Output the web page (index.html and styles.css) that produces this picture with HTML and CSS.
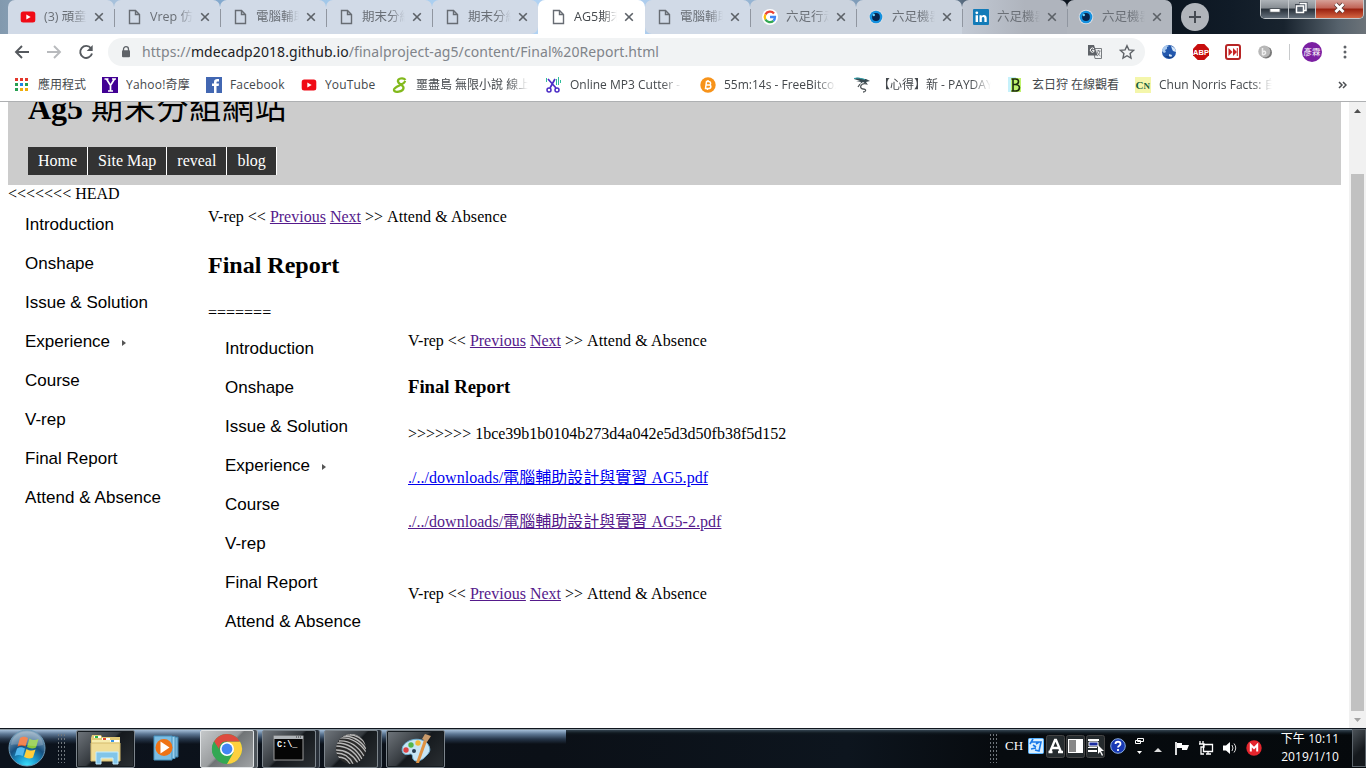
FILE: index.html
```html
<!DOCTYPE html>
<html lang="zh-Hant">
<head>
<meta charset="utf-8">
<title>AG5期末分組網站</title>
<link rel="stylesheet" href="styles.css">
</head>
<body>
<svg class="defs" aria-hidden="true">
<defs>
<symbol id="doc" viewBox="0 0 16 16"><path d="M3.500 1.500h6l4 4v9h-10zM9.500 1.500v4h4" fill="none" stroke="currentColor" stroke-width="1.400"/></symbol>
<symbol id="x" viewBox="0 0 10 10"><path d="M1.200 1.200l7.600 7.600M8.800 1.200L1.200 8.800" stroke="currentColor" stroke-width="1.600"/></symbol>
<symbol id="yt" viewBox="0 0 16 16"><rect x=".7" y="2.500" width="14.600" height="11" rx="2.500" fill="#f00b16"/><path d="M6.300 5.500v5l4.400-2.500z" fill="#fff"/></symbol>
<symbol id="eye" viewBox="0 0 16 16"><circle cx="8" cy="8" r="7.300" fill="#d9dde3"/><circle cx="8" cy="8" r="6.300" fill="#1591df"/><circle cx="8" cy="8" r="3.900" fill="#08254d"/><circle cx="5.800" cy="6" r="1.200" fill="#65d5ff"/></symbol>
<symbol id="google" viewBox="0 0 16 16"><circle cx="8" cy="8" r="8" fill="#fff"/><g fill="none" stroke-width="2.300"><path d="M12 4.400A5.200 5.200 0 0 0 3.400 5.500" stroke="#ea4335"/><path d="M3.400 5.500a5.200 5.200 0 0 0 0 5" stroke="#fbbc05"/><path d="M3.400 10.500a5.200 5.200 0 0 0 8 1.300" stroke="#34a853"/><path d="M11.400 11.800A5 5 0 0 0 13 8H8" stroke="#4285f4"/></g></symbol>
</defs>
</svg>

<header class="tabstrip">
  <div class="tabs">
    <div class="tab first"><svg class="fav"><use href="#yt"/></svg><span>(3) 頑童</span><svg class="close"><use href="#x"/></svg></div>
    <div class="tab"><svg class="fav"><use href="#doc"/></svg><span>Vrep 仿真</span><svg class="close"><use href="#x"/></svg></div>
    <div class="tab"><svg class="fav"><use href="#doc"/></svg><span>電腦輔助</span><svg class="close"><use href="#x"/></svg></div>
    <div class="tab"><svg class="fav"><use href="#doc"/></svg><span>期末分組</span><svg class="close"><use href="#x"/></svg></div>
    <div class="tab last-left"><svg class="fav"><use href="#doc"/></svg><span>期末分組</span><svg class="close"><use href="#x"/></svg></div>
    <div class="tab active"><svg class="fav"><use href="#doc"/></svg><span>AG5期末</span><svg class="close"><use href="#x"/></svg></div>
    <div class="tab first-right"><svg class="fav"><use href="#doc"/></svg><span>電腦輔助</span><svg class="close"><use href="#x"/></svg></div>
    <div class="tab mid"><svg class="fav"><use href="#google"/></svg><span>六足行走</span><svg class="close"><use href="#x"/></svg></div>
    <div class="tab mid"><svg class="fav"><use href="#eye"/></svg><span>六足機器</span><svg class="close"><use href="#x"/></svg></div>
    <div class="tab dim linkedin"><svg class="fav" viewBox="0 0 16 16"><rect width="16" height="16" rx="1" fill="#127bb8"/><circle cx="3.800" cy="3.800" r="1.400" fill="#fff"/><path d="M2.600 6.200H5V13H2.600zM6.500 6.200h2.200v1c1.200-2 5-1.700 5 1.700V13h-2.300V9.500c0-2-2.600-2-2.600 0V13H6.500z" fill="#fff"/></svg><span>六足機器</span><svg class="close"><use href="#x"/></svg></div>
    <div class="tab dim end"><svg class="fav"><use href="#eye"/></svg><span>六足機器</span><svg class="close"><use href="#x"/></svg></div>
  </div>
  <svg class="newtab" viewBox="0 0 28 28"><circle cx="14" cy="14" r="14" fill="#b1b5bb"/><path d="M14 8v12M8 14h12" stroke="#464b52" stroke-width="2"/></svg>
  <div class="winbtns">
    <svg class="wb min" viewBox="0 0 29 18"><rect x="9.500" y="8.500" width="11" height="4" fill="#fff" stroke="#4a5058"/></svg>
    <svg class="wb max" viewBox="0 0 26 18"><path d="M10 3.500h7v7h-2M7.500 5.500h7v7h-7z" fill="none" stroke="#434a54" stroke-width="3"/><path d="M10.500 3.500H17v7h-2M7.500 6h7v6.500h-7z" fill="#56606c" stroke="#fff" stroke-width="1.500"/></svg>
    <svg class="wb cls" viewBox="0 0 47 18"><path d="M19.500 4l8 8M27.500 4l-8 8" stroke="#5a3835" stroke-width="4.500"/><path d="M19.500 4l8 8M27.500 4l-8 8" stroke="#fff" stroke-width="2.800"/></svg>
  </div>
</header>

<div class="toolbar">
  <svg class="nav" viewBox="0 0 16 16"><path d="M15 8H2.500M8 2L2 8l6 6" fill="none" stroke="#55595e" stroke-width="1.900"/></svg>
  <svg class="nav" viewBox="0 0 16 16"><path d="M1 8h12.500M8 2l6 6-6 6" fill="none" stroke="#b8babd" stroke-width="1.900"/></svg>
  <svg class="nav" viewBox="0 0 16 16"><path d="M13 4.300A6 6 0 1 0 14 9.500" fill="none" stroke="#55595e" stroke-width="1.900"/><path d="M14.700 1v6H8.700z" fill="#55595e"/></svg>
  <div class="omnibox">
    <svg class="lock" viewBox="0 0 10 12"><path d="M2.500 5V3.200a2.500 2.500 0 0 1 5 0V5" fill="none" stroke="#5f6368" stroke-width="1.300"/><rect x="1" y="4.300" width="8" height="7" rx="1" fill="#5f6368"/></svg>
    <span class="url">https://<b>mdecadp2018.github.io</b>/finalproject-ag5/content/Final%20Report.html</span>
    <svg class="translate" viewBox="0 0 16 16"><path d="M6 4.500h8.500v10H8z" fill="#f1f3f4" stroke="#787c80"/><path d="M1 1h6l3.500 10.500H1z" fill="#5f6368"/><path d="M7 4.700A2.100 2.100 0 1 0 7 7.500V6.300H5" fill="none" stroke="#fff"/><path d="M9.500 7h4M11.500 6v1M10 12c2-1 2.500-3 2.800-5M10 8c1 2 2 3 3.500 4" fill="none" stroke="#787c80" stroke-width=".9"/></svg>
    <svg class="star" viewBox="0 0 16 16"><path d="M8 1.700l1.900 4.200 4.600.5-3.400 3.100.9 4.500-4-2.300L4 14l.9-4.500L1.500 6.400l4.600-.5z" fill="none" stroke="#5f6368" stroke-width="1.400"/></svg>
  </div>
  <div class="exts">
    <svg viewBox="0 0 16 16"><circle cx="8" cy="8" r="7" fill="#2358ad"/><path d="M1 7c0-3 2-5 5-6l2 1-2 1v2L4 6l1 2-2 1z" fill="#a9c9ee"/><path d="M10 2c3 1 5 3 5 6l-3-1-1-2zM8 10l3 1-1 3-2-1z" fill="#d6e7f8"/><path d="M4 12c3 3 7 3 9 0l-2 1-4-1z" fill="#153f85"/></svg>
    <svg viewBox="0 0 16 16"><path d="M4.700 0h6.600L16 4.700v6.600L11.300 16H4.700L0 11.300V4.700z" fill="#c70d0d"/><text x="8" y="11" text-anchor="middle" class="abp">ABP</text></svg>
    <svg viewBox="0 0 16 16"><rect x="1" y="1" width="14" height="14" rx="2" fill="#fff" stroke="#b72525" stroke-width="2"/><path d="M3.500 4l4 4-4 4zM8 4l4 4-4 4z" fill="#c82323"/><path d="M12.300 4v8" stroke="#c82323"/></svg>
    <svg viewBox="0 0 16 16"><circle cx="9" cy="8.500" r="6" fill="#777"/><circle cx="7.300" cy="7.500" r="6" fill="#b7b7b7"/><path d="M5.500 4v7M5.500 8c3-3 5 3 0 3" fill="none" stroke="#eee" stroke-width="1.500"/></svg>
  </div>
  <i class="sep"></i><div class="avatar">彥霖</div>
  <svg class="menu" viewBox="0 0 4 16"><g fill="#5f6368"><circle cx="2" cy="3" r="1.500"/><circle cx="2" cy="8" r="1.500"/><circle cx="2" cy="13" r="1.500"/></g></svg>
</div>

<nav class="bookmarks">
  <div class="bm b1"><svg viewBox="0 0 16 16"><path d="M1 1h3v3H1zM6 1h3v3H6zM11 1h3v3h-3z" fill="#e3372b"/><path d="M6 6h3v3H6z" fill="#1b83e8"/><path d="M1 6h3v3H1zM11 6h3v3h-3zM1 11h3v3H1z" fill="#28a052"/><path d="M6 11h3v3H6zM11 11h3v3h-3z" fill="#efad0b"/></svg><span>應用程式</span></div>
  <div class="bm b2"><svg viewBox="0 0 16 16"><rect width="16" height="16" fill="#410093"/><path d="M2.500 2h4M10 2h4M4.500 2l4 6.500L12.500 2M8.500 8v6M6 14h5" fill="none" stroke="#fff" stroke-width="1.700"/></svg><span>Yahoo!奇摩</span></div>
  <div class="bm b3"><svg viewBox="0 0 16 16"><rect width="16" height="16" fill="#4267b2"/><path d="M8 16V9H6V6.500h2V5c0-2.200 1.400-3 3.200-3H13v2.400h-1.300c-.9 0-1.200.4-1.200 1.100v1H13L12.700 9h-2.200v7z" fill="#fff"/></svg><span>Facebook</span></div>
  <div class="bm b4"><svg><use href="#yt"/></svg><span>YouTube</span></div>
  <div class="bm b5"><svg viewBox="0 0 16 16"><path d="M13.500 3C11 0 5.500 1.500 6 4.500c.5 3 6 3.500 5.500 6.500-.5 4-9 5-9.500 2C1.500 9 13 8 13 4" fill="none" stroke="#82b91c" stroke-width="2.300"/></svg><span class="fade">噩盡島 無限小說 線上</span></div>
  <div class="bm b6"><svg viewBox="0 0 16 16"><path d="M2 2l8 9M9 2L4 11" stroke="#4b2cc6" stroke-width="1.700"/><circle cx="3" cy="13" r="2" fill="none" stroke="#4b2cc6" stroke-width="1.500"/><circle cx="11" cy="13" r="2" fill="none" stroke="#4b2cc6" stroke-width="1.500"/><path d="M.5 1v4M10.500 2v6M12.500 0v8M14.500 3v3" stroke="#30bd9b"/></svg><span class="fade">Online MP3 Cutter - C</span></div>
  <div class="bm b7"><svg viewBox="0 0 16 16"><circle cx="8" cy="8" r="7.700" fill="#f7931a"/><path d="M6.500 4.500l-1 7h3c3 0 3-3.200.7-3.500C11.500 7.500 11 4.500 8.500 4.500zM6 8h3M8 3v1.500M7.500 11.500V13" fill="none" stroke="#fff" stroke-width="1.500"/></svg><span class="fade">55m:14s - FreeBitco.in</span></div>
  <div class="bm b8"><svg viewBox="0 0 16 16"><path d="M0 2c4-3 8 0 12 0l4 2-4 1 2 3-5-3-3 2 1-2-5-1h4z" fill="#394950"/><path d="M0 1.500c4-1 7 0 11 1" fill="none" stroke="#2d9fa9"/><path d="M13 7C6 5 5 12 9 12s3 3 0 3M6 7l-2 3" fill="none" stroke="#4f5558" stroke-width="1.300"/></svg><span class="fade">【心得】新 - PAYDAY 2</span></div>
  <div class="bm b9"><svg viewBox="0 0 16 16"><path d="M0 0h8v15H0z" fill="#c6f1fb"/><path d="M3 1h10v14H3z" fill="#bff36d"/><path d="M5 2v12M3.500 2h4c4 0 4 5 0 5.500H5M7.500 7.500c5.500 0 5 6.500 0 6.500h-4" fill="none" stroke="#1c2b0e" stroke-width="1.600"/></svg><span>玄日狩 在線觀看</span></div>
  <div class="bm b10"><svg viewBox="0 0 16 16"><rect width="16" height="16" fill="#f4f6ab"/><text x=".5" y="12" class="cn">C<tspan class="small">N</tspan></text></svg><span class="fade">Chun Norris Facts: 自由</span></div>
  <svg class="more" viewBox="0 0 9 8"><path d="M1 1l3 3-3 3M5 1l3 3-3 3" fill="none" stroke="#4b4e52" stroke-width="1.500"/></svg>
</nav>

<div class="viewport">
  <div class="page">
    <div class="banner"><h1>Ag5 <span>期末分組網站</span></h1>
      <ul class="topmenu"><li>Home</li><li>Site Map</li><li>reveal</li><li>blog</li></ul></div>
    <p class="head">&lt;&lt;&lt;&lt;&lt;&lt;&lt; HEAD</p>
    <div class="split outer">
      <ul class="side"><li>Introduction</li><li>Onshape</li><li>Issue &amp; Solution</li><li>Experience<i></i></li><li>Course</li><li>V-rep</li><li>Final Report</li><li class="wide-text">Attend &amp; Absence</li></ul>
      <main>
        <p class="pager">V-rep &lt;&lt; <a>Previous</a> <a>Next</a> &gt;&gt; <span>Attend &amp; Absence</span></p>
        <h2>Final Report</h2>
        <p class="rule">=======</p>
        <div class="split inner">
          <ul class="side"><li>Introduction</li><li>Onshape</li><li>Issue &amp; Solution</li><li>Experience<i></i></li><li>Course</li><li>V-rep</li><li>Final Report</li><li class="wide-text">Attend &amp; Absence</li></ul>
          <section>
            <p class="pager pager2">V-rep &lt;&lt; <a>Previous</a> <a>Next</a> &gt;&gt; <span>Attend &amp; Absence</span></p>
            <h3>Final Report</h3>
            <p>&gt;&gt;&gt;&gt;&gt;&gt;&gt; 1bce39b1b0104b273d4a042e5d3d50fb38f5d152</p>
            <p class="file"><a class="fresh">./../downloads/電腦輔助設計與實習 AG5.pdf</a></p>
            <p class="file"><a>./../downloads/電腦輔助設計與實習 AG5-2.pdf</a></p>
            <p class="pager foot">V-rep &lt;&lt; <a>Previous</a> <a>Next</a> &gt;&gt; <span>Attend &amp; Absence</span></p>
          </section>
        </div>
      </main>
    </div>
  </div>
  <div class="scroll"><svg viewBox="0 0 17 17"><path d="M5 11h7L8.500 7z" fill="#505050"/></svg><div class="thumb"></div><svg viewBox="0 0 17 17"><path d="M5 7h7l-3.500 4z" fill="#a3a3a3"/></svg></div>
</div>

<footer class="taskbar">
  <svg class="orb" viewBox="0 0 38 38"><defs><radialGradient id="og" cx=".5" cy="1" r=".95"><stop offset="0" stop-color="#3fe6ff"/><stop offset=".3" stop-color="#1b9bd0"/><stop offset=".6" stop-color="#17507f"/><stop offset="1" stop-color="#8ea9bf"/></radialGradient></defs><circle cx="19" cy="19" r="18" fill="url(#og)" stroke="#6c9ab8"/><path d="M12 9c3-2 5-1.500 8 0l-2.500 8.500c-3-1.500-5-1.500-8 0z" fill="#f06829"/><path d="M21.500 9.500c3 2 6 2 9 .5l-2.500 8.500c-3 1.500-6 1-9-.5z" fill="#8bc93c"/><path d="M9 19.500c3-2 5-1.500 8 0L14.700 27c-3-1.500-5-1.500-8 0z" fill="#52b8ee"/><path d="M18.500 20c3 2 6 2 9 .5L25 28.500c-3 1.500-6 1-9-.5z" fill="#ffce3b"/><path d="M3 16C4-2 34-2 35 16c-10 3-21-2-32 0z" fill="#fff" opacity=".2"/></svg>
  <i class="grip g1"></i>
  <div class="task wide t1"><svg viewBox="0 0 32 32"><path d="M1 5l1-3h9l1 2h18v23H1z" fill="#e2c975"/><path d="M2 7h28v4H2z" fill="#f7ecae"/><path d="M4 3h7v2H4z" fill="#fff"/><path d="M5 3h3v2H5z" fill="#2bb747"/><path d="M12 5h8v2h-8z" fill="#fff"/><path d="M13 5h3v2h-3z" fill="#df4b31"/><path d="M20 7h9v2h-9z" fill="#fff"/><path d="M21 7h3v2h-3z" fill="#3694e5"/><path d="M1 10h29v18H1z" fill="#f0dd97" stroke="#d5bc6e"/><path d="M6 31V19h22v12h-5v-6H11v6z" fill="#82c5e9" stroke="#c5edff"/></svg></div>
  <svg class="wmp" viewBox="0 0 26 26"><path d="M8 2h17v20H8z" fill="#75b4d8" stroke="#3a7ca6"/><path d="M5 1.500h17v22H5z" fill="#9bd0ec" stroke="#4c94be"/><path d="M1 1h18v24H1z" fill="#7cbde2" stroke="#4593c1"/><circle cx="11" cy="12.500" r="8.500" fill="#ef7315"/><path d="M7.500 6.500l9 6-9 6z" fill="#fff"/></svg>
  <div class="task bright stack t2"><svg viewBox="0 0 32 32"><circle cx="16" cy="16" r="15" fill="#33a853"/><path d="M16 8.500h13A15 15 0 0 1 16 31l6.500-11.500z" fill="#fed03f"/><path d="M3 8.500A15 15 0 0 1 16 1a15 15 0 0 1 13 7.500H16a7 7 0 0 0-6.500 11z" fill="#de4b3f"/><path d="M3 8.500a15 15 0 0 0 0 15L12 22z" fill="#33a853"/><circle cx="16" cy="16" r="7" fill="#fff"/><circle cx="16" cy="16" r="5.400" fill="#4285f4"/></svg></div>
  <div class="task stack t3"><svg viewBox="0 0 32 32"><rect x="1" y="3" width="29" height="24" fill="#050505" stroke="#999"/><path d="M1 4.500h29" stroke="#b0b4b8" stroke-width="3"/><path d="M23 4h1M25 4h1M27 4h1" stroke="#333"/><text x="4" y="14" class="cmd">C:\_</text></svg></div>
  <div class="task stack t4"><svg viewBox="0 0 32 32"><clipPath id="ball"><circle cx="16" cy="16" r="15"/></clipPath><circle cx="16" cy="16" r="15" fill="#2b2b2b"/><g clip-path="url(#ball)" fill="none" stroke="#b9b9b9" stroke-width="1.300"><path d="M11 2q14-1 20 10M8 3q15 0 23 13M5 5q16-1 26 14M4 8q15-1 25 15M2 10q16 0 25 16M1 13q16 0 24 15M1 17q14 0 22 13M1 20q12 0 17 11M3 24q8 0 12 7M15 1q9-1 15 7"/></g></svg></div>
  <div class="task wide t5"><svg viewBox="0 0 32 32"><path d="M3 13C9 4 25 4 29 13c2 5 0 7-3 10-4 5-11 7-13 3-1-3 0-5-3-5-5 2-10-1-7-8z" fill="#c7e5f4" stroke="#6baccf"/><circle cx="6" cy="17" r="2.700" fill="#dd4244"/><circle cx="11" cy="12" r="2.700" fill="#54b649"/><circle cx="18" cy="10" r="2.700" fill="#f2b938"/><circle cx="14" cy="18" r="2" fill="#263e51"/><path d="M16 30l8-23 3 1-8 22z" fill="#df9343"/><path d="M22 6l3-5 6 2-4 6z" fill="#c99a6b"/></svg></div>
  <div class="tray">
    <i class="grip g2"></i><span class="ch">CH</span>
    <svg class="ime" viewBox="0 0 16 16"><rect x=".5" y=".5" width="15" height="15" rx="1" fill="#d9efff" stroke="#5ab4ff"/><path d="M5 1L2 6M3 4h10l-2 9-4-1M5 7l3 2M3 11l5-1M8 6l3-2" fill="none" stroke="#1878e8" stroke-width="1.600"/></svg>
    <svg class="lang" viewBox="0 0 20 23"><rect x=".5" y=".5" width="18" height="22" rx="2" fill="#252b2e" stroke="#444"/><path d="M4 17l5-12h1l5 12M6 13h7M2.500 17h4M12 17h5" fill="none" stroke="#fff" stroke-width="2.300"/></svg>
    <svg class="lang" viewBox="0 0 20 23"><rect x=".5" y=".5" width="18" height="22" rx="2" fill="#252b2e" stroke="#444"/><path d="M2 4h15v14H2z" fill="#fff"/><path d="M3 5h7v12H3z" fill="#888"/></svg>
    <svg class="lang" viewBox="0 0 20 23"><rect x=".5" y=".5" width="18" height="22" rx="2" fill="#252b2e" stroke="#444"/><path d="M2 4h11v2H2zM2 15h9v2H2zM2 12h9v1H2z" fill="#fff"/><path d="M3 7h9v4H3z" fill="#1a2ca0" stroke="#fff"/><path d="M12 10v9l2-2 2 4 1-1-2-4h3z" fill="#fff"/></svg>
    <svg class="help" viewBox="0 0 16 16"><circle cx="8" cy="8" r="7.300" fill="#1839b5" stroke="#8baede"/><path d="M5.500 6c0-3 5-3 5 0 0 1.700-2.500 1.600-2.500 3.500M8 11v2" fill="none" stroke="#fff" stroke-width="1.800"/></svg>
    <svg class="restore" viewBox="0 0 9 18"><path d="M2.500 1.500h6v3h-6zM.5 3.500h5v3h-5z" fill="#080d10" stroke="#fff"/><path d="M2 14h5l-2.500 3z" fill="#fff"/></svg>
    <svg class="up" viewBox="0 0 8 4"><path d="M0 4h8L4 0z" fill="#ddd"/></svg>
    <svg class="flag" viewBox="0 0 16 16"><path d="M2 2v13" stroke="#fff" stroke-width="1.700"/><path d="M3 3h5v2h7l-2 5H8V8H3z" fill="#fff"/></svg>
    <svg class="net" viewBox="0 0 16 16"><path d="M5.500 4.500h9v7h-9zM8 14h5M10 11v3M2 1v3M5 1v3M1 4h5v3H3v7h3" fill="none" stroke="#fff" stroke-width="1.300"/></svg>
    <svg class="vol" viewBox="0 0 16 16"><path d="M1 5.500h3L8 2v12l-4-3.500H1z" fill="#fff"/><path d="M10 5q2 3 0 6M12 3.500q3.500 4.500 0 9" fill="none" stroke="#ddd"/></svg>
    <svg class="mega" viewBox="0 0 16 16"><circle cx="8" cy="8" r="7.700" fill="#e4252d"/><path d="M4.800 11.500V5L8 8.200 11.200 5v6.500" fill="none" stroke="#fff" stroke-width="2"/></svg>
    <div class="clock"><div>下午 10:11</div><div>2019/1/10</div></div>
    <i class="desktop"></i>
  </div>
</footer>
</body>
</html>
```
FILE: styles.css
```css
*{box-sizing:border-box}
body{margin:0;width:1366px;height:768px;overflow:hidden;display:flex;flex-direction:column;background:#fff;font-family:"Open Sans","Noto Sans CJK TC",sans-serif}
svg{display:block;flex-shrink:0}
.defs{position:absolute;width:0;height:0}
p,h1,h2,h3,ul{margin:0;padding:0;list-style:none}

.tabstrip{height:34px;flex-shrink:0;display:flex;background:linear-gradient(90deg,#8299ae 0,#a9c4df 9%,#80a5ca 15%,#a6cced 25%,#b4d4f5 45%,#7895b1 65%,#7890a8 69%,#202b38 73%,#070e17 80%,#101b27 90%,#18232e 94%,#56626c 98%,#6c7379 100%)}
.tabs{display:flex;padding-left:8px}
.tab{width:106px;height:34px;flex-shrink:0;padding-left:12px;display:flex;align-items:center;background:#d1dae7;color:#6a6f76;border-radius:7px 7px 0 0;position:relative}
.tab::after{content:"";position:absolute;right:-1px;top:9px;width:1px;height:18px;background:#9096a0;z-index:1}
.tab.last-left::after,.tab.active::after,.tab.end::after{display:none}
.tab .fav{width:16px;height:16px;color:#676c73}
.tab span{width:43px;margin-left:8px;font-size:12.500px;line-height:18px;white-space:nowrap;overflow:hidden;-webkit-mask-image:linear-gradient(90deg,#000 65%,transparent);mask-image:linear-gradient(90deg,#000 65%,transparent)}
.tab .close{width:10px;height:10px;margin-left:7px;color:#5c6167}
.tab.last-left{border-bottom-right-radius:7px}
.tab.active{width:107px;background:#fff;color:#45494d}
.tab.first-right{width:105px;padding-left:11px;border-bottom-left-radius:7px}
.tab.mid{background:#cbd3de}
.tab.dim{background:#b1b6be;width:105px;padding-left:11px}
.tab.linkedin{background:linear-gradient(90deg,#c2c9d4,#afb4bd 60%)}
.newtab{width:28px;height:28px;margin:3px 0 0 9px}
.winbtns{display:flex;height:19px;margin-left:51px;border:1px solid #c5c9cc;border-top:0;border-radius:0 0 5px 5px;overflow:hidden}
.wb{height:18px;background:linear-gradient(#aeb3b8,#868c92 45%,#272f38 50%,#65707c);border-right:1px solid #c2c6ca}
.min{width:28px}
.max{width:27px}
.cls{width:47px;border:0;background:linear-gradient(#d6a097,#c06255 45%,#99200f 50%,#d46542)}

.toolbar{height:36px;flex-shrink:0;display:flex;align-items:center;padding-left:14px}
.nav{width:16px;height:16px;margin-right:16px}
.omnibox{width:1037px;height:28px;border-radius:14px;background:#f1f3f4;display:flex;align-items:center;padding-left:13px;margin-left:-2px}
.lock{width:10px;height:12px}
.url{width:545px;margin-left:11px;font-family:"Noto Sans",sans-serif;font-size:14px;letter-spacing:.077px;color:#80848a;white-space:nowrap;line-height:22px}
.url b{font-weight:400;color:#202124}
.translate{width:16px;height:16px;margin-left:400px}
.star{width:16px;height:16px;margin-left:16px}
.exts{display:flex;gap:16px;margin-left:16px}
.exts svg{width:16px;height:16px}
.abp{font:bold 7.500px "Liberation Sans",sans-serif;fill:#fff}
.sep{width:1px;height:16px;background:#c8cacc;margin-left:16px}
.avatar{width:20px;height:20px;margin-left:12px;border-radius:50%;background:#7b1fa2;color:#fff;font-size:8.500px;line-height:20px;text-align:center;white-space:nowrap}
.menu{width:4px;height:16px;margin-left:21px}

.bookmarks{height:32px;flex-shrink:0;display:flex;align-items:center;padding:0 0 2px 14px;border-bottom:1px solid #aeb0b2;color:#44484c;font-size:12px}
.bm{display:flex;align-items:center;gap:8px;flex-shrink:0;height:28px}
.bm svg{width:16px;height:16px}
.bm span{white-space:nowrap;overflow:hidden;flex:1;line-height:20px}
.bm .fade{-webkit-mask-image:linear-gradient(90deg,#000 82%,transparent);mask-image:linear-gradient(90deg,#000 82%,transparent)}
.b1{width:72px;margin-right:16px}
.b2{width:88px;margin-right:16px;letter-spacing:.2px}
.b3{width:80px;margin-right:15px;letter-spacing:.15px}
.b4{width:76px;margin-right:15px;letter-spacing:.15px}
.b5{width:136px;margin-right:18px}
.b6{width:136px;margin-right:18px}
.b7{width:136px;margin-right:18px}
.b8{width:137px;margin-right:17px}
.b9{width:112px;margin-right:15px}
.b10{width:137px}
.cn{font:bold 11px "Liberation Serif",serif;fill:#155e3c}
.small{font-size:9px}
.more{width:9px;height:8px;margin-left:66px}

.viewport{height:626px;flex-shrink:0;display:flex}
.page{width:1349px;padding:0 8px;font-family:"Liberation Serif","Noto Sans CJK TC",serif;font-size:16px;line-height:18px;color:#000;overflow:hidden}
.banner{height:83px;background:#ccc;padding-left:20px;overflow:hidden}
h1{font-size:32px;line-height:38px;height:38px;margin-top:-16px;margin-bottom:23px}
h1 span{font-weight:400;font-family:"Noto Sans CJK TC",sans-serif;letter-spacing:.7px}
.topmenu{display:flex}
.topmenu li{height:28px;padding:0 10px;line-height:28px;background:#333;color:#fff;border-right:1px solid #fff}
.head{height:18px}
.split{display:flex}
.side{width:200px;flex-shrink:0;padding-left:17px;font:17px/39px "Liberation Sans",sans-serif}
.side li{height:39px;display:flex;align-items:center}
.side .wide-text{letter-spacing:.06px}
.side i{margin-left:12px;margin-top:3px;border:3px solid transparent;border-left:4px solid #555;border-right:0}
.outer>.side{padding-top:2px}
.inner>.side{padding-top:7px}
a{color:#551a8b;text-decoration:underline}
.fresh{color:#00e}
.pager{margin-top:5px}
.pager span{letter-spacing:.1px}
h2{font-size:24px;line-height:28px;margin:25px 0}
.pager2{margin-top:10px}
h3{font-size:18.720px;line-height:22px;margin:26px 0 27px}
.file{height:18px;margin-top:26px;letter-spacing:.03px}
.foot{margin-top:54px}
.scroll{width:17px;background:#f1f1f1;display:flex;flex-direction:column;align-items:center}
.scroll svg{width:17px;height:17px}
.thumb{width:13px;height:537px;margin-top:55px;background:#c1c1c1}

.taskbar{height:40px;flex-shrink:0;display:flex;align-items:center;padding-left:8px;background:linear-gradient(#10161e 1px,#8b99a3 1px,#8b99a3 2px,transparent 2px),linear-gradient(#a3bdd8 2px,#5d7794 6px,#26364a 11px,transparent 16px) 0 0/566px 40px no-repeat,linear-gradient(#33434f 2px,#101920 5px,transparent 7px),linear-gradient(90deg,#0c131d,#0b1017 40%,#0d151e 62%,#070b0f 73%,#05090c)}
.orb{width:38px;height:38px}
.grip{width:9px;height:30px;background-image:radial-gradient(circle,#6f767c 0 .7px,transparent 1px);background-size:3px 4px}
.g1{margin-left:11px}
.task{width:54px;height:38px;margin-top:1px;border:1px solid #7d858c;border-radius:2px;box-shadow:inset 0 0 0 1px #151b20;background:linear-gradient(135deg,#70767c,#34393e 46%,#15191d 50%,#2a2f33);display:flex;align-items:center;justify-content:center}
.task svg{width:32px;height:32px}
.task.wide{width:59px}
.t1{margin-left:10px}
.task.bright{background:linear-gradient(135deg,#c5c8ca,#9a9d9f 46%,#707476 50%,#a0a3a5);border-color:#e0e3e5;box-shadow:3px 0 0 #4d545a,4px 0 0 #a0a6ab}
.stack{box-shadow:3px 0 0 #293039,4px 0 0 #68727b}
.wmp{width:26px;height:26px;margin-left:18px}
.t2{margin-left:21px}
.t3,.t4,.t5{margin-left:8px}
.cmd{font:bold 8.500px "Liberation Mono",monospace;fill:#fff}
.tray{margin-left:auto;height:40px;display:flex;align-items:center;color:#fff}
.ch{font:13px "Liberation Serif",serif;width:18px;margin:0 5px 4px 7px}
.ime{width:16px;height:16px;margin-right:2px;margin-bottom:4px}
.lang{width:20px;height:23px;margin-bottom:3px}
.help{width:16px;height:16px;margin:0 9px 4px 4px}
.restore{width:9px;height:18px;margin-bottom:4px}
.up{width:8px;height:4px;margin:3px 12px 0 10px}
.flag,.net,.vol{width:16px;height:16px;margin-right:8px}
.mega{width:16px;height:16px}
.clock{width:60px;margin-left:18px;font-size:12px;line-height:18px;letter-spacing:.1px;text-align:center;white-space:nowrap}
.desktop{width:14px;height:38px;margin-left:12px;border:1px solid #5c646b;background:linear-gradient(135deg,#4a5157,#15191d 60%)}
```
